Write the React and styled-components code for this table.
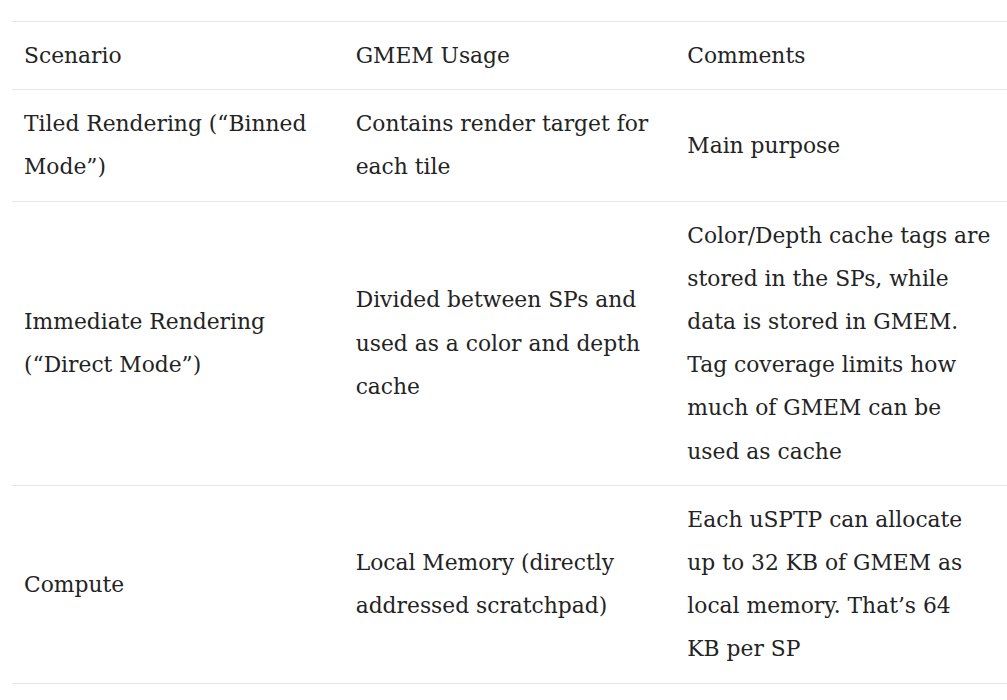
import styled, { createGlobalStyle } from 'styled-components';

const GlobalStyle = createGlobalStyle`
  html, body {
    margin: 0;
    padding: 0;
    background: #ffffff;
  }
`;

const rows = [
  {
    scenario: ['Tiled Rendering (“Binned', 'Mode”)'],
    usage: ['Contains render target for', 'each tile'],
    comments: ['Main purpose'],
  },
  {
    scenario: ['Immediate Rendering', '(“Direct Mode”)'],
    usage: ['Divided between SPs and', 'used as a color and depth', 'cache'],
    comments: [
      'Color/Depth cache tags are',
      'stored in the SPs, while',
      'data is stored in GMEM.',
      'Tag coverage limits how',
      'much of GMEM can be',
      'used as cache',
    ],
  },
  {
    scenario: ['Compute'],
    usage: ['Local Memory (directly', 'addressed scratchpad)'],
    comments: [
      'Each uSPTP can allocate',
      'up to 32 KB of GMEM as',
      'local memory. That’s 64',
      'KB per SP',
    ],
  },
];

const Lines = ({ lines }) =>
  lines.map((line, i) => (
    <span key={i}>
      {line}
      {i < lines.length - 1 && <br />}
    </span>
  ));

const App = () => {
  return (
    <Page>
      <GlobalStyle />
      <Table>
        <thead>
          <tr>
            <Cell>Scenario</Cell>
            <Cell>GMEM Usage</Cell>
            <Cell>Comments</Cell>
          </tr>
        </thead>
        <tbody>
          {rows.map((row, i) => (
            <tr key={i}>
              <Cell>
                <Lines lines={row.scenario} />
              </Cell>
              <Cell>
                <Lines lines={row.usage} />
              </Cell>
              <Cell>
                <Lines lines={row.comments} />
              </Cell>
            </tr>
          ))}
        </tbody>
      </Table>
    </Page>
  );
};

const Page = styled.div`
  padding: 21px 0 0 12px;
  width: 995px;
`;

const Table = styled.table`
  width: 995px;
  border-collapse: collapse;
  table-layout: fixed;
  font-family: 'DejaVu Serif', 'Liberation Serif', serif;
  font-size: 21.8px;
  line-height: 43.2px;
  color: #232323;
`;

const Cell = styled.td`
  width: 307px;
  padding: 12px;
  vertical-align: middle;
  white-space: nowrap;
  border-top: 1px solid #e6e6e6;
  border-bottom: 1px solid #e6e6e6;
`;

export default App;
